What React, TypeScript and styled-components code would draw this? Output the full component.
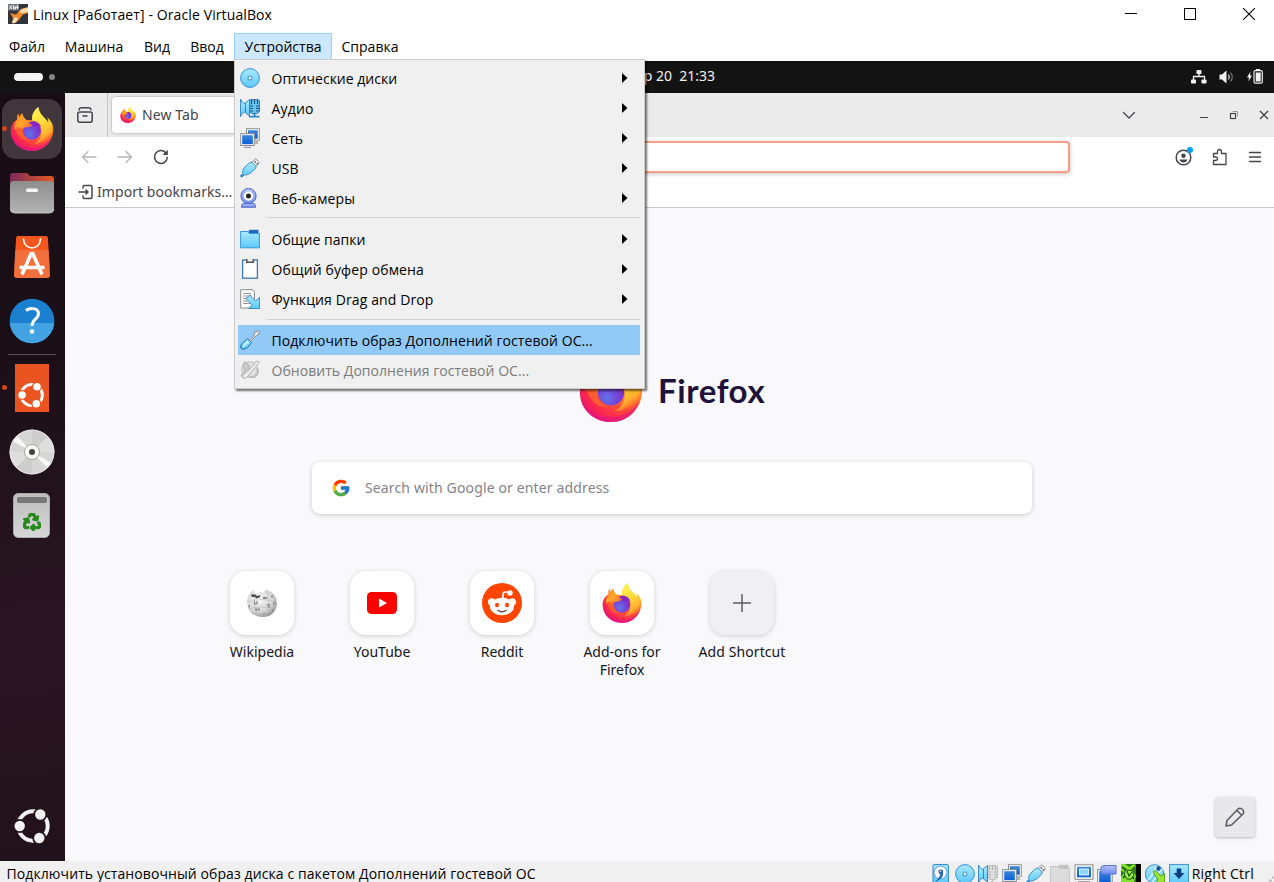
import React from "react";
import styled, { createGlobalStyle } from "styled-components";
import { FcGoogle } from "react-icons/fc";
import { FaRecycle } from "react-icons/fa";

const hostFont = `"Open Sans", "Noto Sans", sans-serif`;
const guestFont = `"Noto Sans", "Open Sans", sans-serif`;

const Global = createGlobalStyle`
  *, *::before, *::after { box-sizing: border-box; }
  html, body { margin: 0; padding: 0; overflow: hidden; background: #fff; }
  svg { display: block; flex: none; }
`;

/* ---------- text ---------- */

const Text = styled.span<{ $ls?: number }>`
  display: block;
  white-space: nowrap;
  letter-spacing: ${(p) => p.$ls ?? 0}px;
`;

/* ---------- host window ---------- */

const Window = styled.div`
  position: relative;
  display: flex;
  flex-direction: column;
  width: 1274px;
  height: 882px;
  overflow: hidden;
  background: #fff;
  color: #000;
  font-family: ${hostFont};
  font-size: 14px;
`;

const TitleBar = styled.header`
  display: flex;
  align-items: center;
  height: 30px;
  padding: 0 0 2px 8px;
  gap: 5px;
`;

const WindowButtons = styled.div`
  display: flex;
  margin-left: auto;
  padding-right: 5px;
  gap: 19px;
`;

const WindowButton = styled.div`
  display: grid;
  place-items: center;
  width: 40px;
  height: 28px;
`;

const MenuBar = styled.nav`
  display: flex;
  align-items: flex-end;
  height: 31px;
  padding-bottom: 1px;
`;

const MenuTitle = styled.div<{ $w: number; $open?: boolean }>`
  display: flex;
  align-items: center;
  justify-content: center;
  width: ${(p) => p.$w}px;
  height: 27px;
  border: 1px solid ${(p) => (p.$open ? "#99d1ff" : "transparent")};
  background: ${(p) => (p.$open ? "#cce8ff" : "transparent")};
`;

const Popup = styled.div`
  position: absolute;
  left: 234px;
  top: 59px;
  width: 411px;
  padding: 3px 4px 3px 3px;
  border: 1px solid #ccc;
  background: #f0f0f0;
  box-shadow: 2px 2px 2px rgba(0, 0, 0, 0.55);
  clip-path: inset(0 -6px -6px 0);
`;

const PopupRow = styled.div<{ $active?: boolean; $disabled?: boolean }>`
  display: flex;
  align-items: center;
  height: 30px;
  padding: 0 12.5px 0 2px;
  gap: 11.5px;
  color: ${(p) => (p.$disabled ? "#7a7a7a" : "#000")};
  background: ${(p) => (p.$active ? "#91c9f7" : "transparent")};
  > svg:last-child:not(:first-child) { margin-left: auto; }
`;

const PopupLine = styled.div<{ $low?: boolean }>`
  height: 1px;
  margin: ${(p) => (p.$low ? "5px 0 5px 29px" : "4px 0 6px 29px")};
  background: #d2d2d2;
`;

const StatusBar = styled.footer`
  display: flex;
  align-items: flex-start;
  height: 21px;
  padding: 0 0 0 6.5px;
  background: #f0f0f0;
`;

const StatusText = styled.div`
  padding-top: 4px;
  line-height: 17px;
`;

const StatusIcons = styled.div`
  display: flex;
  gap: 3.8px;
  margin-left: auto;
  padding: 3px 3px 0 0;
`;

const Grip = styled.div`
  width: 20px;
  padding: 14px 0 0 15px;
`;

/* ---------- guest desktop ---------- */

const Guest = styled.main`
  display: flex;
  flex-direction: column;
  height: 800px;
  font-family: ${guestFont};
`;

const TopBar = styled.div`
  display: grid;
  grid-template-columns: 1fr 157px 1fr;
  align-items: center;
  height: 32px;
  padding: 0 11px 2px 10px;
  background: #131313;
  color: #f2f2f2;
  font-size: 14px;
`;

const Workspaces = styled.div`
  display: flex;
  align-items: center;
  gap: 6px;
  padding: 2px 0 0 4px;
`;

const Workspace = styled.i<{ $on?: boolean }>`
  width: ${(p) => (p.$on ? 29 : 6)}px;
  height: ${(p) => (p.$on ? 8 : 6)}px;
  border-radius: 4px;
  background: ${(p) => (p.$on ? "#f4f4f4" : "#858585")};
`;

const Clock = styled.div`
  display: flex;
  justify-content: flex-end;
  padding-bottom: 1px;
  white-space: pre;
`;

const Tray = styled.div`
  display: flex;
  justify-content: flex-end;
  align-items: center;
  gap: 12px;
  padding-top: 1px;
`;

const Desktop = styled.div`
  display: flex;
  height: 768px;
`;

const Dock = styled.aside`
  display: flex;
  flex-direction: column;
  align-items: center;
  width: 65px;
  padding: 4px 1px 3px 0;
  background: linear-gradient(170deg, #170d13 0%, #1c1018 35%, #2a1522 72%, #21111a 100%);
`;

const DockSlot = styled.div<{ $running?: boolean }>`
  position: relative;
  display: grid;
  place-items: center;
  width: 64px;
  height: 64px;
  &::before {
    content: "";
    display: ${(p) => (p.$running ? "block" : "none")};
    position: absolute;
    left: 2px;
    top: 29px;
    width: 5px;
    height: 5px;
    border-radius: 50%;
    background: #d1481b;
  }
`;

const LauncherSlot = styled(DockSlot)`
  padding: 0 1px 1px 0;
`;

const DockTile = styled.div`
  display: grid;
  place-items: center;
  width: 60px;
  height: 60px;
  border-radius: 14px;
  background: #40363c;
`;

const DockLine = styled.div`
  width: 48px;
  height: 1px;
  margin: 1px 0;
  background: #545053;
`;

const DockSpacer = styled.div`
  flex: 1;
`;

const Browser = styled.section`
  display: flex;
  flex-direction: column;
  flex: 1;
  background: #fff;
  color: #45444b;
  font-size: 14px;
`;

const TabStrip = styled.div`
  display: flex;
  align-items: center;
  height: 44px;
  background: #ebebeb;
`;

const TabOverview = styled.div`
  display: grid;
  place-items: center;
  width: 43px;
  height: 44px;
  padding-right: 2px;
  border-right: 1px solid #c4c4c4;
`;

const Tab = styled.div`
  display: flex;
  align-items: center;
  gap: 6px;
  width: 225px;
  height: 36px;
  margin-left: 4px;
  padding-left: 8px;
  border-radius: 4px;
  background: #fff;
  box-shadow: 0 0 3px rgba(0, 0, 0, 0.35);
  span { padding-bottom: 2px; }
`;

const StripButtons = styled.div`
  display: flex;
  align-items: center;
  margin-left: auto;
  padding-right: 4px;
`;

const StripButton = styled.div<{ $w: number }>`
  display: flex;
  justify-content: flex-end;
  width: ${(p) => p.$w}px;
`;

const NavBar = styled.div`
  display: flex;
  align-items: center;
  height: 40px;
  padding: 0 11px 0 16px;
  gap: 20px;
`;

const AddressBar = styled.div`
  width: 780px;
  height: 32px;
  margin: 0 0 0 101px;
  border: 2px solid #f5a084;
  border-radius: 4px;
  background: #fff;
  box-shadow: 0 1px 4px rgba(0, 0, 0, 0.25);
`;

const NavRight = styled.div`
  display: flex;
  align-items: center;
  gap: 18px;
  margin-left: auto;
`;

const BookmarkBar = styled.div`
  display: flex;
  align-items: center;
  height: 31px;
  gap: 3px;
  padding: 0 0 1px 13px;
  border-bottom: 1px solid #c9c9cb;
`;

const NewTabPage = styled.div`
  display: flex;
  flex-direction: column;
  flex: 1;
  padding: 150px 0 0 165px;
  background: #f9f9fb;
  color: #15141a;
`;

const Brand = styled.div`
  display: flex;
  align-items: flex-end;
  height: 64px;
  margin-left: 349px;
  gap: 15px;
`;

const BrandName = styled.div`
  font-family: Lato, "Open Sans", sans-serif;
  font-weight: 700;
  font-size: 33px;
  line-height: 40px;
  height: 52px;
  color: #20123a;
`;

const SearchBox = styled.div`
  display: flex;
  align-items: center;
  gap: 14px;
  width: 720px;
  height: 52px;
  margin: 40px 0 0 82px;
  padding-left: 19px;
  border-radius: 8px;
  background: #fff;
  color: #84838a;
  box-shadow: 0 1px 4px rgba(58, 57, 68, 0.25);
  span { padding-bottom: 2px; }
`;

const Shortcuts = styled.div`
  display: flex;
  gap: 20px;
  margin: 57px 0 0 -18px;
`;

const Shortcut = styled.div`
  display: flex;
  flex-direction: column;
  align-items: center;
  width: 100px;
  line-height: 18px;
  text-align: center;
`;

const ShortcutTile = styled.div<{ $muted?: boolean }>`
  display: grid;
  place-items: center;
  width: 64px;
  height: 64px;
  margin-bottom: 8px;
  border-radius: 16px;
  background: ${(p) => (p.$muted ? "#f0f0f2" : "#fff")};
  box-shadow: 0 1px 5px rgba(58, 57, 68, 0.22);
`;

const EditButton = styled.div`
  display: grid;
  place-items: center;
  width: 40px;
  height: 40px;
  margin: auto 19px 24px auto;
  border-radius: 4px;
  background: #e8e8ea;
  box-shadow: 0 1px 3px rgba(58, 57, 68, 0.35);
`;

/* ---------- drawings ---------- */

const FirefoxLogo = ({ size, id }: { size: number; id: string }) => (
  <svg width={size} height={size} viewBox="0 0 128 132">
    <defs>
      <radialGradient id={`${id}b`} cx="0.82" cy="0.14" r="1.02">
        <stop offset="0" stopColor="#fff14f" />
        <stop offset="0.2" stopColor="#ffc53a" />
        <stop offset="0.42" stopColor="#ff9125" />
        <stop offset="0.66" stopColor="#ff4b36" />
        <stop offset="0.84" stopColor="#f9274f" />
        <stop offset="1" stopColor="#e0107c" />
      </radialGradient>
      <linearGradient id={`${id}y`} x1="0.3" y1="0" x2="0.7" y2="1">
        <stop offset="0" stopColor="#fff44f" />
        <stop offset="0.45" stopColor="#ffd93b" />
        <stop offset="0.78" stopColor="#ffb02e" />
        <stop offset="1" stopColor="#ff6a2f" stopOpacity="0" />
      </linearGradient>
      <radialGradient id={`${id}g`} cx="0.35" cy="0.7" r="0.75">
        <stop offset="0" stopColor="#6173ea" />
        <stop offset="0.5" stopColor="#7348d8" />
        <stop offset="1" stopColor="#8a22c4" />
      </radialGradient>
      <linearGradient id={`${id}h`} x1="0" y1="0" x2="1" y2="0.6">
        <stop offset="0" stopColor="#ff8b1c" />
        <stop offset="0.6" stopColor="#ffa62b" />
        <stop offset="1" stopColor="#ff7139" />
      </linearGradient>
    </defs>
    <path fill={`url(#${id}b)`} d="M23 18C20 24 19 32 20 37C8 44 0 56 0 72C0 105 28 132 64 132C100 132 128 104 128 67C128 52 120 39 110 33C114 40 114 45 113 48C104 31 85 24 83 0C71 9 62 24 65 40L47 39C41 35 35 27 35 19C31 22 28 26 27 30C24 27 23 22 23 18Z" />
    <path fill="#e31587" opacity="0.65" d="M3 88C12 112 38 124 66 122C94 120 114 104 123 88C114 116 92 132 64 132C34 132 10 114 3 88Z" />
    <path fill={`url(#${id}y)`} d="M83 0C71 9 62 24 65 40C84 42 93 56 93 71C93 90 86 102 72 110C102 108 123 88 125 66C126 52 120 39 110 33C114 40 114 45 113 48C104 31 85 24 83 0Z" />
    <circle cx="64" cy="71" r="27" fill={`url(#${id}g)`} />
    <path fill="#8b25c1" d="M58 45C71 38 86 46 92 60C82 55 78 56 70 60Z" />
    <path fill={`url(#${id}h)`} d="M23 18C19 28 19 33 20 37C11 47 10 58 12 68C17 65 28 62 37 67C39 60 43 62 50 61C58 60 63 57 64 53C57 50 55 49 52 44L47 39C40 34 36 27 35 19C31 22 28 26 27 30C24 27 23 22 23 18Z" />
    <path fill="#ff672d" opacity="0.75" d="M14 63C20 59 30 60 37 67C34 82 43 96 60 101C38 104 18 88 14 63Z" />
  </svg>
);

const FilesIcon = () => (
  <svg width="46" height="44" viewBox="0 0 46 44">
    <defs>
      <linearGradient id="fl1"><stop offset="0" stopColor="#7b2a5a" /><stop offset="1" stopColor="#e65a20" /></linearGradient>
      <linearGradient id="fl2" x2="0" y2="1"><stop offset="0" stopColor="#8d8d8d" /><stop offset="1" stopColor="#b4b4b4" /></linearGradient>
    </defs>
    <path fill="url(#fl1)" d="M1 5Q1 2 4 2H17Q19 2 20 4L21 5H42Q45 5 45 9V20H1Z" />
    <rect x="1" y="10" width="44" height="32" rx="4" fill="url(#fl2)" />
    <path d="M2 39Q3 42 6 42H40Q44 42 45 38" fill="none" stroke="#c8c8c8" />
    <rect x="17" y="17.500" width="12" height="3.400" rx="1.500" fill="#f5f5f5" />
  </svg>
);

const StoreIcon = () => (
  <svg width="36" height="42" viewBox="0 0 36 42">
    <path fill="#f4561d" d="M4 0H32Q34 0 34 3L36 39Q36 42 33 42H3Q0 42 0 39L2 3Q2 0 4 0Z" />
    <path fill="#f08150" opacity=".6" d="M1.2 14H34.8L36 39Q36 42 33 42H3Q0 42 0 39Z" />
    <path fill="none" stroke="#fff" strokeWidth="1.700" strokeLinecap="round" d="M9.500 3C10 15 26 15 26.500 3" />
    <path fill="none" stroke="#fff" strokeWidth="3.500" strokeLinejoin="round" d="M8 38.500L17.200 17.500H18.800L28 38.500M5.500 31.500H30.500" />
  </svg>
);

const HelpIcon = () => (
  <svg width="46" height="46" viewBox="0 0 46 46">
    <defs><clipPath id="hc"><circle cx="23" cy="23" r="22.300" /></clipPath></defs>
    <g clipPath="url(#hc)">
      <rect width="46" height="46" fill="#1b80d0" />
      <rect y="25" width="46" height="21" fill="#43a3e2" />
    </g>
    <path fill="none" stroke="#fff" strokeWidth="3" d="M17 12.500C20 10 29 9 29.500 15.500C29.800 21 23 21 23 28" />
    <circle cx="23" cy="33.500" r="2.200" fill="#fff" />
  </svg>
);

const CircleOfFriends = ({ size, color, back }: { size: number; color: string; back: string }) => (
  <svg width={size} height={size} viewBox="0 0 36 36">
    <circle cx="19" cy="18" r="14.700" fill="none" stroke={color} strokeWidth="4" />
    {[[5.700, 18], [26.300, 6.500], [25.300, 30]].map(([x, y]) => (
      <circle key={y} cx={x} cy={y} r="6.100" fill={color} stroke={back} strokeWidth="1.800" />
    ))}
  </svg>
);

const UbuntuTile = styled.div`
  display: flex;
  justify-content: center;
  align-items: flex-end;
  width: 34px;
  height: 48px;
  padding: 0 2px 4px 0;
  background: #e95420;
`;

const DiscIcon = () => (
  <svg width="46" height="46" viewBox="0 0 46 46">
    <circle cx="23" cy="23" r="22.300" fill="#d6d6d6" />
    <path fill="#cdcdcd" d="M23 23L7 38.500A22.300 22.300 0 0 0 23 45.300Z M23 23V.7A22.300 22.300 0 0 1 39 7.500Z" />
    <path fill="#dfdfdf" d="M23 23L.7 23A22.300 22.300 0 0 0 7 38.500Z M23 23H45.300A22.300 22.300 0 0 0 39 7.500Z" />
    <path fill="#f7f7f7" d="M23 23L3.500 12A22 22 0 0 1 8 6.800Z M23 23L42.500 34A22 22 0 0 1 38.500 39Z" />
    <circle cx="23" cy="23" r="22" fill="none" stroke="#e8e8e8" />
    <circle cx="23" cy="23" r="7.500" fill="#f6f6f4" stroke="#aaa89c" />
    <circle cx="23" cy="23" r="3" fill="#444" />
  </svg>
);

const Bin = styled.div`
  display: flex;
  flex-direction: column;
  align-items: center;
  width: 37px;
  height: 45px;
  margin: 0 1px 1px 0;
  padding-top: 3px;
  gap: 10px;
  border: 1px solid #a9a9a9;
  border-radius: 5px;
  background: linear-gradient(#bdbdbd, #d6d6d6);
  color: #26891d;
  &::before {
    content: "";
    width: 30px;
    height: 6px;
    border-radius: 2px;
    background: #767676;
    flex: none;
  }
  svg { stroke: #26891d; stroke-width: 34px; }
`;

const Arrow = () => (
  <svg width="6" height="10" viewBox="0 0 6 10"><path d="M0 0L5.500 5L0 10Z" /></svg>
);

const V = ({ children }: { children: React.ReactNode }) => (
  <svg width="20" height="20" viewBox="0 0 20 20">{children}</svg>
);

const HiddenSvg = styled.svg`
  position: absolute;
`;

const VboxDefs = () => (
  <HiddenSvg width="0" height="0">
    <defs>
      <linearGradient id="sky" x2="0" y2="1"><stop offset="0" stopColor="#a9e9fd" /><stop offset="1" stopColor="#5cc9fb" /></linearGradient>
      <linearGradient id="deep" x2="0" y2="1"><stop offset="0" stopColor="#3b87dc" /><stop offset="1" stopColor="#0a5fd4" /></linearGradient>
      <linearGradient id="violet" x2="0" y2="1"><stop offset="0" stopColor="#b7c5fa" /><stop offset="1" stopColor="#6c8cf3" /></linearGradient>
    </defs>
  </HiddenSvg>
);

const OpticalIcon = () => (
  <V>
    <circle cx="10" cy="10" r="9.400" fill="url(#sky)" stroke="#3a8fd6" strokeWidth="1" />
    <circle cx="10" cy="10" r="2" fill="#d8f4ff" stroke="#5a95c4" strokeWidth="1.100" />
  </V>
);

const AudioIcon = ({ off }: { off?: boolean }) => (
  <V>
    <path d="M9.500 3.500Q9.500 1.500 12 1.500H17Q19.500 1.500 19.500 3.500V13.500L17.500 15.500H11.500L9.500 13.500Z" fill={off ? "#dedede" : "#66c6f2"} stroke={off ? "#b8b8b8" : "#256ca8"} strokeWidth=".9" />
    <path d="M11.500 2V6M14.500 2V6M17.500 2V6M10 8H13M16 8H19M10 10.500H13M16 10.500H19M10 13H13M16 13H19" stroke={off ? "#b4b4b4" : "#174e7d"} strokeWidth="1.100" />
    <path d="M14.500 15.500V18M9 18.700H19.500" stroke={off ? "#c2c2c2" : "#2489c9"} strokeWidth="1.800" />
    <path d="M.5 1Q2 5 5.500 6V13.500Q2 14.500.5 18.500Z" fill="url(#sky)" stroke="#3183c5" strokeWidth=".9" />
    <path d="M5.500 4.500L9.500 1.500V18L5.500 15Z" fill="url(#sky)" stroke="#3183c5" strokeWidth=".9" />
  </V>
);

const NetworkIcon = () => (
  <V>
    <rect x="6.500" y=".7" width="12.800" height="11.500" fill="#fff" stroke="#8d8d8d" />
    <rect x="8" y="2.200" width="9.800" height="8.500" fill="url(#deep)" />
    <path d="M14 16L16 12H18V16Z" fill="#b5b5b5" />
    <rect x=".7" y="5.700" width="13.600" height="11.800" fill="#fff" stroke="#8d8d8d" />
    <rect x="2.200" y="7.200" width="10.600" height="9" fill="url(#deep)" />
    <path d="M4 19.300H11" stroke="#8a8a8a" />
  </V>
);

const UsbIcon = () => (
  <V>
    <path d="M11.500 5L15.500 .8L19.400 4.500L15.500 9Z" fill="#f4f4f4" stroke="#8c8c8c" />
    <path d="M14.700 3.500L15.700 4.500M16.800 5.400L17.700 6.300" stroke="#333" strokeWidth="1.300" />
    <path d="M4 10L9.500 4.700Q11 3.500 12.500 4.500L15.500 7.500Q16.500 9 15.500 10.500L10.500 15Q7 17.500 4 17L2 19L.8 18L2.800 15.500Q2 12.500 4 10Z" fill="url(#sky)" stroke="#3486bf" strokeWidth=".9" />
    <path d="M.8 18.800L3.200 16.500" stroke="#3486bf" strokeWidth="2.400" />
  </V>
);

const WebcamIcon = () => (
  <V>
    <path d="M1.500 19.300Q1 15.500 4 15.500H13Q16 15.500 15.500 19.300Z" fill="url(#violet)" stroke="#4a66bd" strokeWidth=".9" />
    <circle cx="8.500" cy="8" r="7.600" fill="url(#violet)" stroke="#5069c0" />
    <circle cx="8.500" cy="8" r="5" fill="#fff" stroke="#8da2e0" strokeWidth=".5" />
    <circle cx="8.500" cy="8" r="2.500" fill="#222" />
  </V>
);

const FolderIcon = ({ off }: { off?: boolean }) => (
  <V>
    <path d="M7.500 4L9.500 .8H18.500V5H7.500Z" fill={off ? "#c2c2c2" : "#2468bd"} />
    <path d="M.6 2.500H8L9.500 4.500H19.400V18.800H.6Z" fill={off ? "#dcdcdc" : "url(#sky)"} stroke={off ? "#c3c3c3" : "#3795dc"} />
  </V>
);

const ClipboardIcon = () => (
  <V>
    <rect x="2.600" y="1" width="14.800" height="18.200" fill="#fff" stroke="#3979b5" strokeWidth="1.300" />
    <path d="M6 0V4H14V0Z" fill="#555" />
    <path d="M7.500 0H12.500V2.500H7.500Z" fill="#eee" />
  </V>
);

const DragIcon = () => (
  <V>
    <path d="M.7.700H12.500L14.500 3V19H.7Z" fill="#fbfbfb" stroke="#8b8b8b" />
    <path d="M3 4.500H11M3 7H9M3 9.500H8M3 12H10M3 14.500H12" stroke="#999" strokeWidth="1.200" />
    <path d="M6 9.500L10 6L15.500 12L19.500 8.500V19.500H8.500L12 16Z" fill="url(#sky)" stroke="#3586c2" strokeWidth=".9" />
  </V>
);

const ToolIcon = () => (
  <V>
    <path d="M9 10.500L14 5.500L14.500 2.500L18.500.700L19.500 1.700L17.500 5.500L15 6.500L10.500 11.500Z" fill="#ededed" stroke="#7d7d7d" strokeWidth=".9" />
    <path d="M7.500 8.800L11.500 12.500Q8 18.500 4 19.300Q.8 19.600.6 17Q.8 13.500 7.500 8.800Z" fill="url(#sky)" stroke="#1d69a9" />
    <path d="M3 16.500L8 12" stroke="#d4f4ff" strokeWidth="1.500" />
  </V>
);

const UpdateIcon = () => (
  <V>
    <circle cx="9.500" cy="9.500" r="8" fill="#dedede" stroke="#c4c4c4" />
    <path d="M4 2L8 4L10 9L8 16L3 18L1 15L5 11L3 6Z" fill="#c9c9c9" stroke="#b2b2b2" />
    <path d="M9 10L14 4.500L15 2L18 1L19 2.500L17 5.500L11 12Q8 18 4 18.500Q1 17.500 3 14.500Z" fill="#ececec" stroke="#b4b4b4" />
    <path d="M17 8Q20 14 14 17L9 17" fill="none" stroke="#bdbdbd" strokeWidth="2" />
  </V>
);

const HardDiskIcon = () => (
  <V>
    <rect x="2" y=".6" width="15.400" height="19" rx="1" fill="url(#sky)" stroke="#2f83cf" />
    <circle cx="9.500" cy="8.500" r="6.400" fill="#fff" stroke="#4a91cb" strokeWidth=".8" />
    <path d="M11.500 8Q13.500 12 8 16L4 18Q9 13 9.500 10Z" fill="#1d5fae" />
    <circle cx="9.800" cy="7.800" r="2.400" fill="#1d5fae" />
    <circle cx="9.500" cy="7.500" r=".8" fill="#fff" />
  </V>
);

const DisplayIcon = () => (
  <V>
    <rect x="1" y=".8" width="18" height="14.500" fill="#fff" stroke="#8a8a8a" />
    <rect x="3" y="2.800" width="14" height="10.500" fill="url(#deep)" />
    <rect x="5.500" y="5" width="9" height="6" fill="#8bd6fb" stroke="#fff" strokeWidth=".8" />
    <path d="M4 18H16" stroke="#8a8a8a" strokeWidth="1.500" />
  </V>
);

const RecordIcon = () => (
  <V>
    <rect x=".7" y="5.500" width="14.500" height="14" fill="#fff" stroke="#8a8a8a" />
    <rect x="2.200" y="7" width="11.500" height="11" fill="url(#deep)" />
    <path d="M4 3L6.500 1.500H19V10H6.500L4 8.500Z" fill="url(#violet)" stroke="#5e75cd" />
    <path d="M7 2V9.500" stroke="#8095e8" />
  </V>
);

const CpuIcon = () => (
  <V>
    <rect x="14.500" width="5.500" height="20" fill="#020802" />
    <rect width="15" height="20" fill="#2d7a12" />
    <path d="M0 0H4L8 3L13 0L15 3L12 7L15 12L13 18L9 20H0V13L3 9L0 6Z" fill="#7fe02f" />
    <path d="M1 3L5 6M14 3L11 6M2 14L5 11M13 15L11 12" stroke="#17500c" strokeWidth="1.600" />
    <path d="M4 6L11 6.500L13 11L10 15H6L3.500 11Z" fill="#9ff04e" stroke="#174d0c" />
    <path d="M6 7L8 12L11 8" fill="none" stroke="#174d0c" strokeWidth="1.200" />
  </V>
);

const MouseIcon = () => (
  <V>
    <circle cx="9.500" cy="10" r="9.300" fill="url(#sky)" stroke="#3a8ecb" />
    <path d="M3 16C8 12 8 6 13 2M7 18C12 14 13 9 17 5" stroke="#e0f6ff" strokeWidth="1.500" fill="none" />
    <circle cx="13.500" cy="4.500" r="2.200" fill="#1a4f85" />
    <path d="M8 8L10 6.500L16 12L19.500 9.500V19.500H10L13 16Z" fill="#9be52f" stroke="#4f9b18" strokeWidth=".9" />
  </V>
);

const HostKeyIcon = () => (
  <V>
    <rect x=".6" y=".6" width="18.800" height="19" fill="url(#sky)" stroke="#3d8fd0" />
    <path d="M7.700 4.500H12.300V9H15.500L10 15L4.500 9H7.700Z" fill="#0c3f86" />
  </V>
);

const AppIcon = () => (
  <svg width="20" height="20" viewBox="0 0 20 20">
    <rect width="20" height="20" fill="#30343c" />
    <path d="M2 9L8 10.500L13 5L20 3V9L15 10.500L10 17L4 19.500L5 14Z" fill="#f0892b" />
    <path d="M11 7.500L14 5L20 3.500V8L14 9.500Z" fill="#ffd9a2" />
    <path d="M4 18L7 13L10 14L8 18.500L5 19.500Z" fill="#ffe0b5" />
    <rect width="11" height="6.500" fill="#777b82" />
    <path d="M1.500 1.500L4 5M4 1.500L1.500 5M5.500 1.500V5H7.500V3H5.500M9.500 1V5M8 3.500H10.500" fill="none" stroke="#fff" strokeWidth=".9" />
  </svg>
);

const line = { fill: "none", stroke: "#45444b", strokeWidth: 1.5, strokeLinecap: "round", strokeLinejoin: "round" } as const;

const WikipediaGlobe = () => (
  <svg width="32" height="30" viewBox="0 0 32 30">
    <defs><radialGradient id="wg" cx=".4" cy=".35" r=".7"><stop offset="0" stopColor="#fafafa" /><stop offset=".65" stopColor="#d4d4d4" /><stop offset="1" stopColor="#8f8f8f" /></radialGradient></defs>
    <path fill="url(#wg)" d="M5 4L8 2L9 5L12 6L14 3L17 5L20 1.500Q31 5 31 16Q29 29 16 29Q2 28 1 14Q1 8 5 4Z" />
    <path fill="#444" d="M5 6.500L9 6.500L11 8L14.500 7L13.500 9.500L10 10.500L9 9L6 9Z" />
    <path fill="none" stroke="#b8b8b8" strokeWidth=".6" d="M1 14Q15 9 31 14M2 21Q16 17 30 21M9 8Q7 18 13 29M21 3Q25 15 19 29" />
    <path fill="none" stroke="#6a6a6a" strokeWidth=".9" d="M8.500 13V16H11V13M17 9L18 11L19 9L20 11L21 9M26 7V10M21 16L22.500 18L24 16M23 18V20M10 20V22.500L11.500 21L13 22.500V20M3 17V19.500M26 23L27.500 21.500M18 25V26.500M28 14V16.500" />
  </svg>
);

const RedditIcon = () => (
  <svg width="40" height="40" viewBox="0 0 40 40">
    <circle cx="20" cy="20" r="20" fill="#ff4500" />
    <path d="M20.500 16L21.500 9.500Q23 8.500 27 9.500" fill="none" stroke="#fff" strokeWidth="1.700" />
    <circle cx="28" cy="10" r="2.700" fill="#fff" />
    <circle cx="9.700" cy="19" r="3.700" fill="#fff" />
    <circle cx="30.300" cy="19" r="3.700" fill="#fff" />
    <ellipse cx="20" cy="23.500" rx="12" ry="8.800" fill="#fff" />
    <ellipse cx="15" cy="22" rx="2" ry="2.200" fill="#ff4500" />
    <ellipse cx="25" cy="22" rx="2" ry="2.200" fill="#ff4500" />
    <path d="M15.500 27Q20 30.500 24.500 27" fill="none" stroke="#5b4a48" strokeWidth="1.300" />
  </svg>
);

/* ---------- data ---------- */

const menuTitles = [
  { label: "Файл", w: 54 },
  { label: "Машина", w: 80 },
  { label: "Вид", w: 46 },
  { label: "Ввод", w: 54 },
  { label: "Устройства", w: 98, open: true },
  { label: "Справка", w: 76 },
];

type Entry = { label: string; icon: React.ReactNode; ls?: number; kind?: "sub" | "active" | "disabled" };
const groups: Entry[][] = [
  [
    { label: "Оптические диски", icon: <OpticalIcon />, kind: "sub" },
    { label: "Аудио", icon: <AudioIcon />, ls: 0.2, kind: "sub" },
    { label: "Сеть", icon: <NetworkIcon />, kind: "sub" },
    { label: "USB", icon: <UsbIcon />, kind: "sub" },
    { label: "Веб-камеры", icon: <WebcamIcon />, ls: 0.15, kind: "sub" },
  ],
  [
    { label: "Общие папки", icon: <FolderIcon />, ls: 0.05, kind: "sub" },
    { label: "Общий буфер обмена", icon: <ClipboardIcon />, ls: 0.13, kind: "sub" },
    { label: "Функция Drag and Drop", icon: <DragIcon />, ls: 0.11, kind: "sub" },
  ],
  [
    { label: "Подключить образ Дополнений гостевой ОС...", icon: <ToolIcon />, ls: 0.07, kind: "active" },
    { label: "Обновить Дополнения гостевой ОС...", icon: <UpdateIcon />, ls: 0.04, kind: "disabled" },
  ],
];

export default function App() {
  return (
    <Window>
      <Global />
      <VboxDefs />
      <TitleBar>
        <AppIcon />
        <Text $ls={0.11}>Linux [Работает] - Oracle VirtualBox</Text>
        <WindowButtons>
          <WindowButton><svg width="12" height="12"><path d="M0 5.500H12" stroke="#000" /></svg></WindowButton>
          <WindowButton><svg width="12" height="12"><rect x=".5" y=".5" width="11" height="11" fill="none" stroke="#000" /></svg></WindowButton>
          <WindowButton><svg width="12" height="12"><path d="M0 0L12 12M12 0L0 12" stroke="#000" strokeWidth="1.100" /></svg></WindowButton>
        </WindowButtons>
      </TitleBar>
      <MenuBar>
        {menuTitles.map((m) => (
          <MenuTitle key={m.label} $w={m.w} $open={m.open}><Text>{m.label}</Text></MenuTitle>
        ))}
      </MenuBar>

      <Guest>
        <TopBar>
          <Workspaces><Workspace $on /><Workspace /></Workspaces>
          <Clock><Text>Апр 20&nbsp; 21:33</Text></Clock>
          <Tray>
            <svg width="16" height="14" viewBox="0 0 16 14" fill="#f2f2f2"><rect x="5.500" width="5" height="4" rx=".8" /><rect y="9.500" width="5" height="4" rx=".8" /><rect x="10.500" y="9.500" width="5" height="4" rx=".8" /><path d="M8 4V6.500M2.500 10V6.500H13.500V10" fill="none" stroke="#f2f2f2" strokeWidth="1.300" /></svg>
            <svg width="16" height="14" viewBox="0 0 16 14"><path d="M.5 4.500H3L7.500.500V13.500L3 9.500H.5Z" fill="#f2f2f2" /><path d="M9.500 4.500Q11 7 9.500 9.500" stroke="#ddd" fill="none" strokeWidth="1.300" /><path d="M11.500 2.500Q15 7 11.500 11.500" stroke="#777" fill="none" strokeWidth="1.200" /></svg>
            <svg width="16" height="15" viewBox="0 0 16 15"><path d="M3.500 2.500L0 8.500H2L1.500 12.500L5 6.500H3Z" fill="#f2f2f2" /><path d="M9 0H13V1.500H9Z" fill="#f2f2f2" /><rect x="7" y="1.700" width="8.300" height="12.500" rx="1.500" fill="none" stroke="#f2f2f2" strokeWidth="1.200" /><rect x="8.700" y="3.500" width="5" height="9" fill="#f2f2f2" /></svg>
          </Tray>
        </TopBar>
        <Desktop>
          <Dock>
            <DockSlot $running><DockTile><FirefoxLogo size={44} id="ffd" /></DockTile></DockSlot>
            <DockSlot><FilesIcon /></DockSlot>
            <DockSlot><StoreIcon /></DockSlot>
            <DockSlot><HelpIcon /></DockSlot>
            <DockLine />
            <DockSlot $running><UbuntuTile><CircleOfFriends size={26} color="#fff" back="#e95420" /></UbuntuTile></DockSlot>
            <DockSlot><DiscIcon /></DockSlot>
            <DockSlot><Bin><FaRecycle size={18} /></Bin></DockSlot>
            <DockSpacer />
            <LauncherSlot><CircleOfFriends size={36} color="#f2f2f2" back="#22121b" /></LauncherSlot>
          </Dock>
          <Browser>
            <TabStrip>
              <TabOverview>
                <svg width="16" height="16" viewBox="0 0 16 16"><rect x=".8" y="5" width="14.400" height="10.200" rx="2" {...line} /><path d="M2 2.700Q2.500.800 4.500.800H11.500Q13.500.800 14 2.700M6 9H10" {...line} /></svg>
              </TabOverview>
              <Tab><FirefoxLogo size={16} id="fft" /><Text $ls={0.1}>New Tab</Text></Tab>
              <StripButtons>
                <StripButton $w={20}><svg width="14" height="14" viewBox="0 0 14 14"><path d="M1.500 4.500L7 10L12.500 4.500" {...line} strokeWidth="1.300" /></svg></StripButton>
                <StripButton $w={73}><svg width="10" height="10"><path d="M1 7.500H9" stroke="#45444b" /></svg></StripButton>
                <StripButton $w={30}><svg width="10" height="10" viewBox="0 0 10 10"><path d="M3.500 1.500H8.500V6.500" stroke="#999" fill="none" /><rect x="1.500" y="3.500" width="5" height="5" fill="none" stroke="#45444b" strokeWidth="1.200" /></svg></StripButton>
                <StripButton $w={31}><svg width="12" height="12" viewBox="0 0 12 12"><path d="M2 2L10 10M10 2L2 10" stroke="#45444b" strokeWidth="1.300" /></svg></StripButton>
              </StripButtons>
            </TabStrip>
            <NavBar>
              <svg width="16" height="16" viewBox="0 0 16 16"><path d="M1.500 8H15M7 2.500L1.500 8L7 13.500" {...line} stroke="#b4b4b7" strokeWidth="1.300" /></svg>
              <svg width="16" height="16" viewBox="0 0 16 16"><path d="M14.500 8H1M9 2.500L14.500 8L9 13.500" {...line} stroke="#b4b4b7" strokeWidth="1.300" /></svg>
              <svg width="16" height="16" viewBox="0 0 16 16"><path d="M14.300 8.500A6.400 6.400 0 1 1 12.700 3.700" {...line} /><path d="M14.800.800V6H9.600Z" fill="#45444b" /></svg>
              <AddressBar />
              <NavRight>
                <svg width="18" height="20" viewBox="0 0 18 20"><circle cx="8.500" cy="10.500" r="7.300" {...line} /><circle cx="8.500" cy="8.800" r="2.200" fill="#45444b" /><path d="M4.500 12.500H12.500Q11.500 15.500 8.500 15.500Q5.500 15.500 4.500 12.500Z" fill="#45444b" /><circle cx="15" cy="3" r="3" fill="#00a4f4" /></svg>
                <svg width="18" height="18" viewBox="0 0 18 18"><path d="M2.500 5.500H6.500V4Q6.500 1.500 8.500 1.500T10.500 4V5.500H15V16.500H2.500V12.500H4Q6.500 12.500 6.500 10.700T4 9H2.500Z" {...line} strokeWidth="1.300" /></svg>
                <svg width="16" height="16" viewBox="0 0 16 16"><path d="M2.500 3.500H13.500M2.500 8H13.500M2.500 12.500H13.500" {...line} strokeWidth="1.300" /></svg>
              </NavRight>
            </NavBar>
            <BookmarkBar>
              <svg width="16" height="16" viewBox="0 0 16 16"><path d="M1 8H9M5 4V3Q5 1.500 6.500 1.500H12.500Q14 1.500 14 3V13Q14 14.500 12.500 14.500H6.500Q5 14.500 5 13V12" {...line} /><path d="M7.500 4.500L11 8L7.500 11.500Z" fill="#45444b" /></svg>
              <Text $ls={0.06}>Import bookmarks…</Text>
            </BookmarkBar>
            <NewTabPage>
              <Brand>
                <FirefoxLogo size={64} id="ffh" />
                <BrandName><Text $ls={0.6}>Firefox</Text></BrandName>
              </Brand>
              <SearchBox><FcGoogle size={20} /><Text $ls={0.14}>Search with Google or enter address</Text></SearchBox>
              <Shortcuts>
                <Shortcut><ShortcutTile><WikipediaGlobe /></ShortcutTile><Text>Wikipedia</Text></Shortcut>
                <Shortcut><ShortcutTile><svg width="30" height="22" viewBox="0 0 30 22"><rect width="30" height="22" rx="4.500" fill="#f00" /><path d="M12 6.500L20 11L12 15.500Z" fill="#fff" /></svg></ShortcutTile><Text>YouTube</Text></Shortcut>
                <Shortcut><ShortcutTile><RedditIcon /></ShortcutTile><Text>Reddit</Text></Shortcut>
                <Shortcut><ShortcutTile><FirefoxLogo size={40} id="ffs" /></ShortcutTile><Text>Add-ons for</Text><Text>Firefox</Text></Shortcut>
                <Shortcut><ShortcutTile $muted><svg width="18" height="18"><path d="M0 9H18M9 0V18" stroke="#5b5b66" strokeWidth="1.500" /></svg></ShortcutTile><Text $ls={0.1}>Add Shortcut</Text></Shortcut>
              </Shortcuts>
              <EditButton>
                <svg width="20" height="20" viewBox="0 0 20 20"><path d="M1 19L2 13.500L13 2Q15 .5 17.500 2.500Q19.500 5 18 7L6.500 18Z M12 3.500L16.500 8" {...line} stroke="#5b5b66" /></svg>
              </EditButton>
            </NewTabPage>
          </Browser>
        </Desktop>
      </Guest>

      <StatusBar>
        <StatusText><Text $ls={0.09}>Подключить установочный образ диска с пакетом Дополнений гостевой ОС</Text></StatusText>
        <StatusIcons>
          <HardDiskIcon /><OpticalIcon /><AudioIcon off /><NetworkIcon /><UsbIcon /><FolderIcon off />
          <DisplayIcon /><RecordIcon /><CpuIcon /><MouseIcon /><HostKeyIcon />
        </StatusIcons>
        <StatusText><Text $ls={0.22}>Right Ctrl</Text></StatusText>
        <Grip><svg width="5" height="7"><path d="M0 5.500H3M3 2.500H5" stroke="#bbb" strokeWidth="2" /></svg></Grip>
      </StatusBar>

      <Popup>
        {groups.map((g, i) => (
          <React.Fragment key={i}>
            {i > 0 && <PopupLine $low={i === 2} />}
            {g.map((e) => (
              <PopupRow key={e.label} $active={e.kind === "active"} $disabled={e.kind === "disabled"}>
                {e.icon}
                <Text $ls={e.ls}>{e.label}</Text>
                {e.kind === "sub" && <Arrow />}
              </PopupRow>
            ))}
          </React.Fragment>
        ))}
      </Popup>
    </Window>
  );
}
